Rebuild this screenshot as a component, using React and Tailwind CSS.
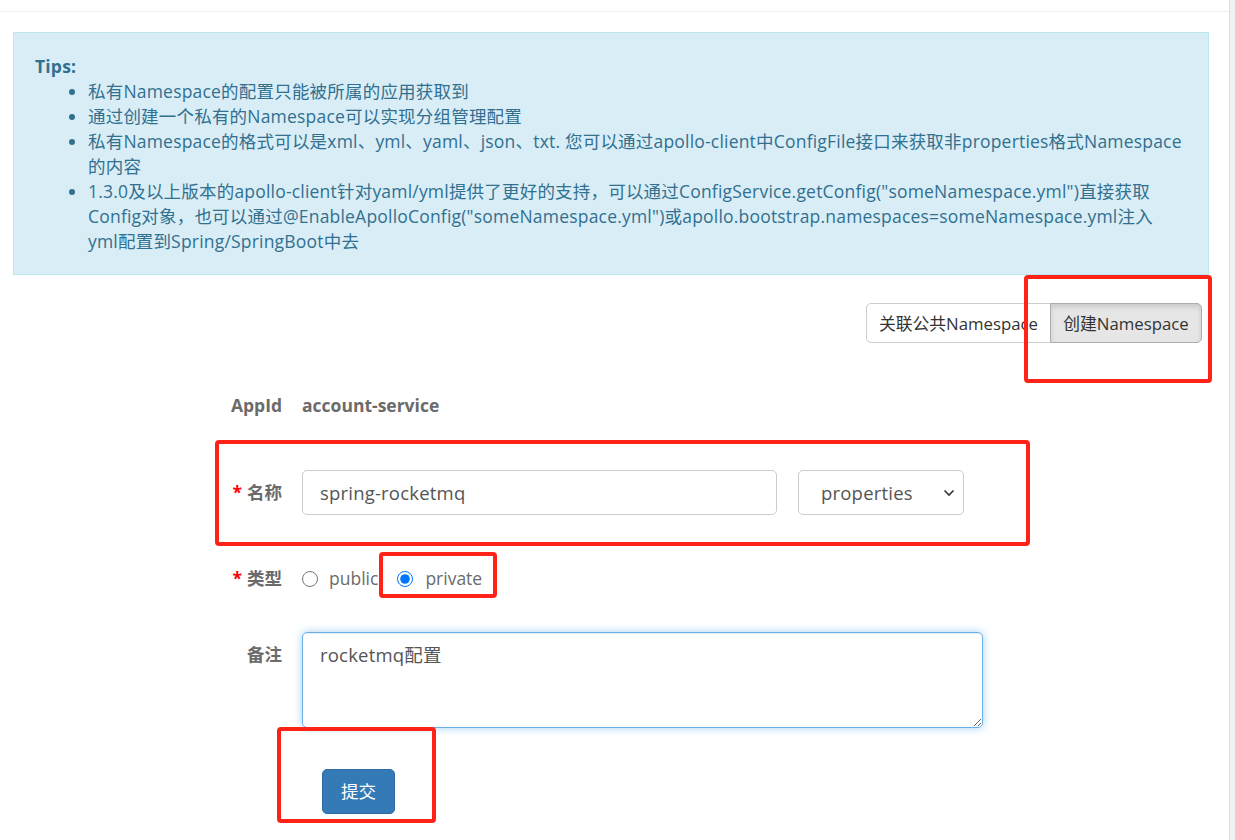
import React from "react";

const font = { fontFamily: '"Open Sans", "Noto Sans CJK SC", sans-serif' };

const tips = [
  ["私有Namespace的配置只能被所属的应用获取到"],
  ["通过创建一个私有的Namespace可以实现分组管理配置"],
  [
    "私有Namespace的格式可以是xml、yml、yaml、json、txt. 您可以通过apollo-client中ConfigFile接口来获取非properties格式Namespace",
    "的内容",
  ],
  [
    '1.3.0及以上版本的apollo-client针对yaml/yml提供了更好的支持，可以通过ConfigService.getConfig("someNamespace.yml")直接获取',
    'Config对象，也可以通过@EnableApolloConfig("someNamespace.yml")或apollo.bootstrap.namespaces=someNamespace.yml注入',
    "yml配置到Spring/SpringBoot中去",
  ],
];

const Label = ({ required, children }) => (
  <div className="w-[282px] shrink-0 text-right font-bold text-[#6b6b6b]">
    {required && <span className="text-[#ff0000] mr-[5px]">*</span>}
    {children}
  </div>
);

const Mark = ({ className }) => (
  <div
    className={`absolute border-[4px] border-[#ff2217] rounded-[4px] pointer-events-none ${className}`}
  />
);

export default function App() {
  return (
    <div className="relative flex min-h-[840px] bg-white text-[17.5px] leading-[25px] text-[#333]" style={font}>
      <div className="w-[1229px] shrink-0">
        <div className="h-[12px] border-b border-[#eeeeee]" />

        {/* tips */}
        <div className="ml-[13px] mt-[20px] w-[1196px] bg-[#d9edf7] border border-[#bce8f1] text-[#31708f] pl-[21px] pt-[21px] pb-[20px] tracking-[0.2px]">
          <div className="font-bold">Tips:</div>
          <ul className="list-disc pl-[53px]">
            {tips.map((lines, i) => (
              <li key={i} className="whitespace-nowrap">
                {lines.map((l, j) => (
                  <div key={j}>{l}</div>
                ))}
              </li>
            ))}
          </ul>
        </div>

        {/* namespace switch */}
        <div className="flex justify-end mt-[28px] pr-[27px]">
          <div className="flex h-[40px] text-[16.8px]">
            <button className="w-[185px] bg-white border border-[#cccccc] rounded-l-[5px] text-[#333]">
              关联公共Namespace
            </button>
            <button className="w-[152px] bg-[#e6e6e6] border border-[#adadad] -ml-px rounded-r-[5px] text-[#333] shadow-[inset_0_3px_5px_rgba(0,0,0,0.125)]">
              创建Namespace
            </button>
          </div>
        </div>

        {/* form */}
        <div className="mt-[40px] flex items-center h-[45px]">
          <Label>AppId</Label>
          <div className="ml-[20px] font-bold text-[#6b6b6b]">account-service</div>
        </div>

        <div className="mt-[42px] flex items-center h-[45px]">
          <Label required>名称</Label>
          <input
            defaultValue="spring-rocketmq"
            className="ml-[20px] w-[475px] h-[45px] border border-[#cccccc] rounded-[5px] px-[17px] text-[18.5px] tracking-[0.2px] text-[#555] outline-none"
          />
          <div className="relative ml-[21px]">
            <select
              defaultValue="properties"
              className="appearance-none w-[166px] h-[45px] border border-[#cccccc] rounded-[5px] pl-[22px] text-[18.5px] tracking-[0.2px] text-[#555] bg-white outline-none"
            >
              <option>properties</option>
              <option>xml</option>
              <option>json</option>
              <option>yml</option>
              <option>yaml</option>
              <option>txt</option>
            </select>
            <svg
              className="absolute right-[9px] top-[19px] pointer-events-none"
              width="12"
              height="8"
              viewBox="0 0 12 8"
            >
              <path d="M1.5 1.5 L6 6 L10.5 1.5" fill="none" stroke="#333" strokeWidth="1.6" />
            </svg>
          </div>
        </div>

        <div className="mt-[41px] flex items-center h-[45px]">
          <Label required>类型</Label>
          <label className="ml-[20px] flex items-center text-[#6b6b6b]">
            <input type="radio" name="type" className="w-4 h-4 m-0" />
            <span className="ml-[11px]">public</span>
          </label>
          <label className="ml-[19px] flex items-center text-[#6b6b6b]">
            <input type="radio" name="type" defaultChecked className="w-4 h-4 m-0" />
            <span className="ml-[12px]">private</span>
          </label>
        </div>

        <div className="mt-[31px] flex items-start">
          <div className="pt-[10px]">
            <Label>备注</Label>
          </div>
          <textarea
            defaultValue="rocketmq配置"
            className="ml-[20px] w-[681px] h-[96px] border border-[#66afe9] rounded-[5px] px-[17px] py-[9px] text-[18.5px] tracking-[0.2px] text-[#555] outline-none shadow-[inset_0_1px_1px_rgba(0,0,0,0.075),0_0_8px_rgba(102,175,233,0.6)]"
          />
        </div>

        <div className="mt-[41px] pl-[322px] pb-[27px]">
          <button className="w-[73px] h-[45px] bg-[#337ab7] border border-[#2e6da4] rounded-[5px] text-white">
            提交
          </button>
        </div>
      </div>
      <div className="flex-1 bg-[#f1f1f4] border-l border-[#dddde2]" />

      {/* annotation boxes */}
      <Mark className="left-[1024px] top-[275px] w-[188px] h-[108px]" />
      <Mark className="left-[215px] top-[440px] w-[815px] h-[106px]" />
      <Mark className="left-[379px] top-[552px] w-[118px] h-[46px]" />
      <Mark className="left-[277px] top-[727px] w-[159px] h-[96px]" />
    </div>
  );
}
